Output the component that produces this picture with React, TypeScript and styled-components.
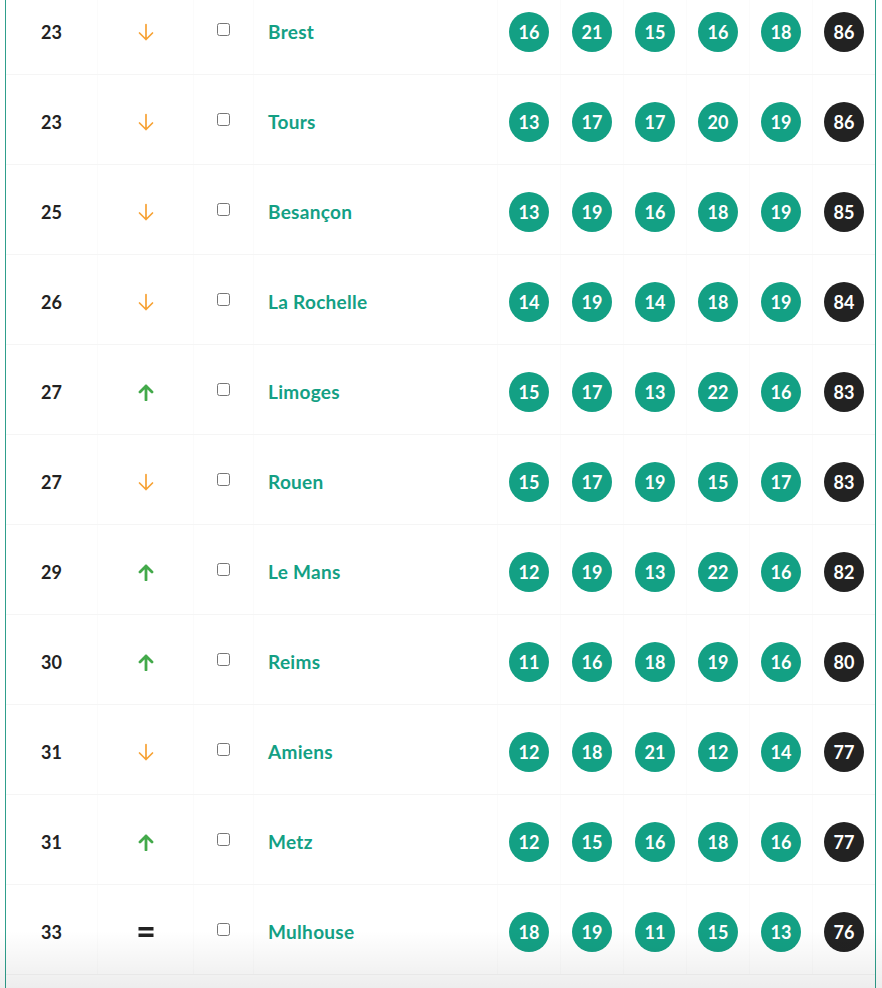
import React from "react";
import styled, { createGlobalStyle } from "styled-components";

const GlobalStyle = createGlobalStyle`
  html, body {
    margin: 0;
    padding: 0;
    background: #ffffff;
    font-family: Lato, "Open Sans", Arial, sans-serif;
  }
`;

const TEAL = "#13a084";

type Trend = "up" | "down" | "same";

interface City {
  rank: number;
  trend: Trend;
  name: string;
  scores: number[];
  total: number;
}

const cities: City[] = [
  { rank: 23, trend: "down", name: "Brest", scores: [16, 21, 15, 16, 18], total: 86 },
  { rank: 23, trend: "down", name: "Tours", scores: [13, 17, 17, 20, 19], total: 86 },
  { rank: 25, trend: "down", name: "Besançon", scores: [13, 19, 16, 18, 19], total: 85 },
  { rank: 26, trend: "down", name: "La Rochelle", scores: [14, 19, 14, 18, 19], total: 84 },
  { rank: 27, trend: "up", name: "Limoges", scores: [15, 17, 13, 22, 16], total: 83 },
  { rank: 27, trend: "down", name: "Rouen", scores: [15, 17, 19, 15, 17], total: 83 },
  { rank: 29, trend: "up", name: "Le Mans", scores: [12, 19, 13, 22, 16], total: 82 },
  { rank: 30, trend: "up", name: "Reims", scores: [11, 16, 18, 19, 16], total: 80 },
  { rank: 31, trend: "down", name: "Amiens", scores: [12, 18, 21, 12, 14], total: 77 },
  { rank: 31, trend: "up", name: "Metz", scores: [12, 15, 16, 18, 16], total: 77 },
  { rank: 33, trend: "same", name: "Mulhouse", scores: [18, 19, 11, 15, 13], total: 76 },
];

const Page = styled.div`
  position: relative;
  width: 882px;
  height: 988px;
  overflow: hidden;
  padding-left: 5px;
  box-sizing: border-box;
`;

const Board = styled.div`
  width: 871px;
  box-sizing: border-box;
  border-left: 1px solid #2f9f8c;
  border-right: 1px solid #2f9f8c;
  margin-top: -15px;
  min-height: 1010px;
`;

const Row = styled.div`
  display: grid;
  grid-template-columns: 91px 96px 60px 244px repeat(6, 63px);
  height: 90px;
  box-sizing: border-box;
  border-bottom: 1px solid #f5f5f5;
`;

const Cell = styled.div<{ $align?: "left" | "center" }>`
  display: flex;
  align-items: center;
  justify-content: ${(p) => (p.$align === "left" ? "flex-start" : "center")};
  padding-top: 4px;
  padding-left: ${(p) => (p.$align === "left" ? "14px" : "0")};
  box-sizing: border-box;
  border-left: 1px solid #fbfbfb;
  &:first-child {
    border-left: none;
  }
`;

const Rank = styled.span`
  font-size: 18px;
  font-weight: 700;
  color: #222222;
`;

const CityName = styled.a`
  font-size: 19px;
  font-weight: 700;
  letter-spacing: 0.3px;
  color: ${TEAL};
  text-decoration: none;
`;

const Check = styled.input`
  width: 13px;
  height: 13px;
  margin: 0 0 4px 0;
`;

const Bubble = styled.span<{ $dark?: boolean }>`
  display: flex;
  align-items: center;
  justify-content: center;
  width: 40px;
  height: 40px;
  border-radius: 50%;
  background: ${(p) => (p.$dark ? "#222222" : TEAL)};
  color: #ffffff;
  font-size: 18px;
  font-weight: 700;
`;

const Fade = styled.div`
  position: absolute;
  left: 0;
  right: 0;
  bottom: 0;
  height: 58px;
  background: linear-gradient(to bottom, rgba(0, 0, 0, 0), rgba(0, 0, 0, 0.07));
  pointer-events: none;
`;

function TrendIcon({ trend }: { trend: Trend }) {
  if (trend === "down") {
    return (
      <svg width="18" height="18" viewBox="0 0 18 18">
        <path
          d="M9 1.5 V16.5 M2.5 10 L9 16.5 L15.5 10"
          fill="none"
          stroke="#f7a234"
          strokeWidth="1.7"
          strokeLinecap="round"
          strokeLinejoin="round"
        />
      </svg>
    );
  }
  if (trend === "up") {
    return (
      <svg width="18" height="18" viewBox="0 0 18 18">
        <path
          d="M9 17 V3 M3 9 L9 3 L15 9"
          fill="none"
          stroke="#43a94a"
          strokeWidth="2.8"
          strokeLinecap="round"
          strokeLinejoin="round"
        />
      </svg>
    );
  }
  return (
    <svg width="18" height="18" viewBox="0 0 18 18">
      <rect x="1.5" y="4" width="15" height="3.5" fill="#222222" />
      <rect x="1.5" y="10.5" width="15" height="3.5" fill="#222222" />
    </svg>
  );
}

export default function App() {
  return (
    <Page>
      <GlobalStyle />
      <Board>
        {cities.map((c) => (
          <Row key={c.name}>
            <Cell>
              <Rank>{c.rank}</Rank>
            </Cell>
            <Cell>
              <TrendIcon trend={c.trend} />
            </Cell>
            <Cell>
              <Check type="checkbox" />
            </Cell>
            <Cell $align="left">
              <CityName href="#">{c.name}</CityName>
            </Cell>
            {c.scores.map((s, i) => (
              <Cell key={i}>
                <Bubble>{s}</Bubble>
              </Cell>
            ))}
            <Cell>
              <Bubble $dark>{c.total}</Bubble>
            </Cell>
          </Row>
        ))}
      </Board>
      <Fade />
    </Page>
  );
}
